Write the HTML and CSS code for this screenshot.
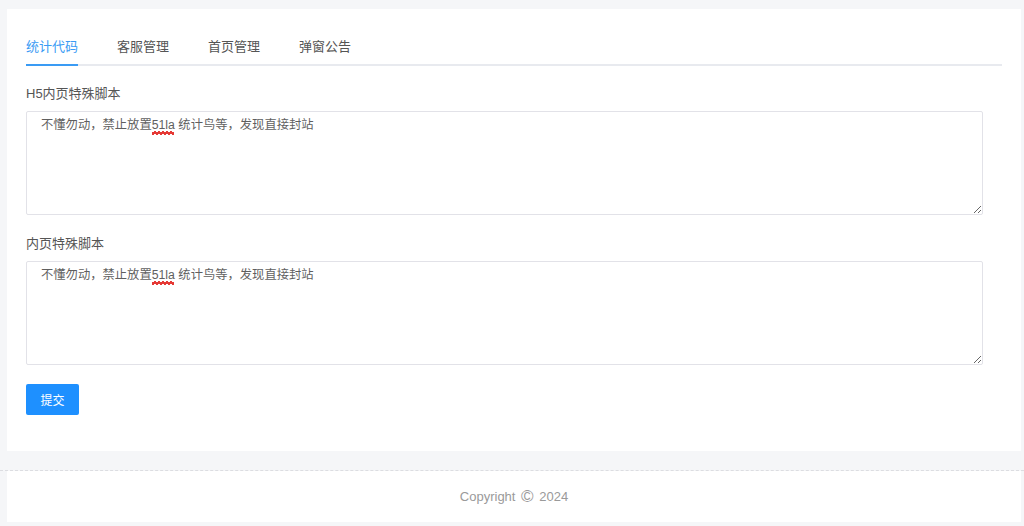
FILE: index.html
```html
<!DOCTYPE html>
<html lang="zh-CN">
<head>
<meta charset="utf-8">
<title>统计代码</title>
<link rel="stylesheet" href="styles.css">
</head>
<body>
<div class="page">
  <div class="card">
    <ul class="tabs">
      <li class="tab active">统计代码</li>
      <li class="tab">客服管理</li>
      <li class="tab">首页管理</li>
      <li class="tab">弹窗公告</li>
    </ul>
    <form class="form">
      <div class="form-item">
        <label class="label">H5内页特殊脚本</label>
        <div class="field">
          <textarea class="textarea" spellcheck="false">不懂勿动，禁止放置51la 统计鸟等，发现直接封站</textarea>
          <span class="squiggle"></span>
        </div>
      </div>
      <div class="form-item">
        <label class="label">内页特殊脚本</label>
        <div class="field">
          <textarea class="textarea" spellcheck="false">不懂勿动，禁止放置51la 统计鸟等，发现直接封站</textarea>
          <span class="squiggle"></span>
        </div>
      </div>
      <button type="button" class="btn">提交</button>
    </form>
  </div>
</div>
<footer class="footer">
  <div class="footer-inner">Copyright <span class="copy">©</span> 2024</div>
</footer>
</body>
</html>
```

FILE: styles.css
```css
* {
  box-sizing: border-box;
}

html, body {
  margin: 0;
  padding: 0;
  background: #f5f6f8;
  font-family: "Liberation Sans", "Noto Sans CJK SC", sans-serif;
  font-size: 13px;
  color: #555;
}

.page {
  padding: 9px 3px 0 7px;
}

.card {
  background: #fff;
  padding: 21px 19px 36px 19px;
}

/* tab header */
.tabs {
  display: flex;
  gap: 39px;
  margin: 0;
  padding: 0;
  list-style: none;
  border-bottom: 2px solid #e8eaef;
}

.tab {
  height: 36px;
  line-height: 34px;
  margin-bottom: -2px;
  border-bottom: 2px solid transparent;
  font-size: 13px;
  color: #555;
}

.tab.active {
  color: #3a9bf4;
  border-bottom-color: #3a9bf4;
}

/* form */
.form {
  padding: 18px 19px 0 0;
}

.form-item {
  margin-bottom: 19px;
}

.label {
  display: block;
  line-height: 20px;
  margin-bottom: 7px;
  color: #555;
}

.field {
  position: relative;
}

.textarea {
  display: block;
  width: 100%;
  height: 104px;
  margin: 0;
  padding: 4px 14px;
  border: 1px solid #e2e2e8;
  border-radius: 2px;
  font-family: "Liberation Sans", "Noto Sans CJK SC", sans-serif;
  font-size: 12.3px;
  line-height: 18px;
  color: #5f5f5f;
  background: #fff;
  resize: vertical;
  outline: none;
}

/* wavy marker under the unknown word */
.squiggle {
  position: absolute;
  left: 126px;
  top: 20px;
  width: 22px;
  height: 4px;
  background:
    linear-gradient(135deg, transparent 35%, #e53935 35%, #e53935 70%, transparent 70%) 0 0 / 4px 4px repeat-x,
    linear-gradient(45deg, transparent 35%, #e53935 35%, #e53935 70%, transparent 70%) 2px 0 / 4px 4px repeat-x;
  pointer-events: none;
}

.btn {
  display: block;
  width: 53px;
  height: 31px;
  margin-top: 1px;
  padding: 0;
  border: none;
  border-radius: 2px;
  background: #1e90ff;
  color: #fff;
  font-family: "Liberation Sans", "Noto Sans CJK SC", sans-serif;
  font-size: 12px;
  cursor: pointer;
}

/* footer */
.footer {
  margin-top: 19px;
  border-top: 1px dashed #dcdde1;
  padding: 0 3px 3px 7px;
}

.footer-inner {
  background: #fff;
  height: 51px;
  line-height: 51px;
  text-align: center;
  color: #9a9a9a;
  font-size: 13px;
}

.copy {
  font-size: 17px;
  margin: 0 2px;
  vertical-align: -1px;
}
```
